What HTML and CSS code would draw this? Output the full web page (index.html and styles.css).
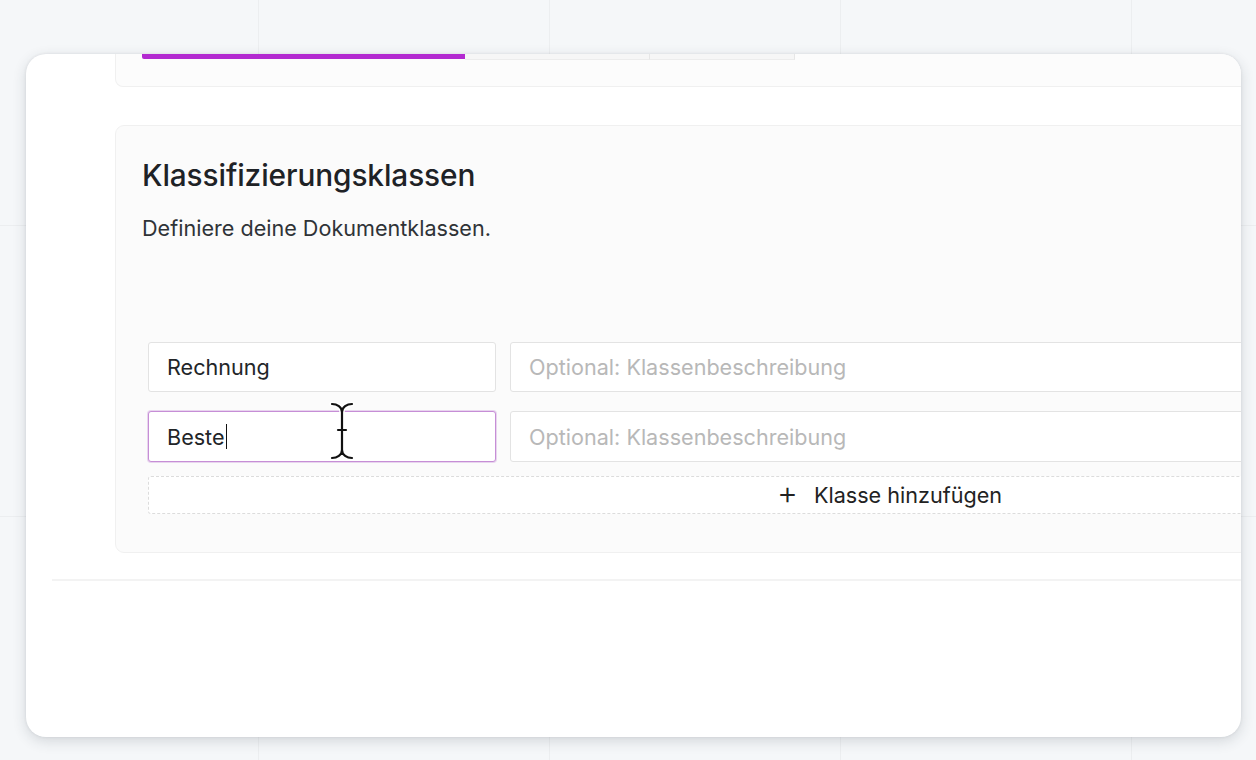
FILE: index.html
```html
<!DOCTYPE html>
<html lang="de">
<head>
<meta charset="utf-8">
<title>Klassifizierungsklassen</title>
<link rel="stylesheet" href="styles.css">
</head>
<body>
<div class="desk">
  <div class="window">
    <div class="top-card">
      <div class="steps">
        <div class="step step-active"></div>
        <div class="step step-mid"></div>
        <div class="step step-last"></div>
      </div>
    </div>
    <section class="card">
      <h2 class="title">Klassifizierungsklassen</h2>
      <p class="subtitle">Definiere deine Dokumentklassen.</p>
      <div class="rows">
        <div class="row">
          <div class="field field-name">Rechnung</div>
          <div class="field field-desc placeholder">Optional: Klassenbeschreibung</div>
        </div>
        <div class="row">
          <div class="field field-name field-focus">Beste<span class="caret"></span></div>
          <div class="field field-desc placeholder">Optional: Klassenbeschreibung</div>
        </div>
        <button class="add-btn" type="button"><span class="plus">+</span>Klasse hinzufügen</button>
      </div>
    </section>
    <div class="divider"></div>
  </div>
  <svg class="ibeam" width="32" height="60" viewBox="0 0 32 60" aria-hidden="true">
    <g fill="none" stroke-linecap="round" stroke-linejoin="round">
      <g stroke="#ffffff" stroke-width="5">
        <path d="M6 3 C11 3 16 6 16 11 C16 6 21 3 26 3"/>
        <path d="M16 11 L16 49"/>
        <path d="M6 57 C11 57 16 54 16 49 C16 54 21 57 26 57"/>
        <path d="M12 29 L20 29"/>
      </g>
      <g stroke="#111111" stroke-width="2.2">
        <path d="M6 3 C11 3 16 6 16 11 C16 6 21 3 26 3"/>
        <path d="M16 11 L16 49"/>
        <path d="M6 57 C11 57 16 54 16 49 C16 54 21 57 26 57"/>
        <path d="M12 29 L20 29"/>
      </g>
    </g>
  </svg>
</div>
</body>
</html>
```
FILE: styles.css
```css
html, body {
  margin: 0;
  padding: 0;
}
body {
  width: 1256px;
  height: 760px;
  overflow: hidden;
  font-family: "Inter", "Liberation Sans", sans-serif;
  background: #f4f7f9;
}
.desk {
  position: relative;
  width: 1256px;
  height: 760px;
  padding: 54px 15px 0 26px;
  box-sizing: border-box;
  background-color: #f5f7f9;
  background-image:
    linear-gradient(to right, rgba(0, 0, 0, 0.035) 1px, transparent 1px),
    linear-gradient(to bottom, rgba(0, 0, 0, 0.035) 1px, transparent 1px);
  background-size: 291px 291px;
  background-position: 258px 225px;
}
.window {
  width: 1215px;
  height: 683px;
  background: #ffffff;
  border-radius: 20px;
  overflow: hidden;
  box-shadow: 0 4px 14px rgba(40, 50, 60, 0.16), 0 0 3px rgba(40, 50, 60, 0.10);
}
.top-card {
  margin-left: 89px;
  width: 1600px;
  height: 33px;
  box-sizing: border-box;
  background: #fcfcfc;
  border: 1px solid #f0f0f0;
  border-top: none;
  border-radius: 0 0 8px 8px;
  padding-left: 26px;
}
.steps {
  display: flex;
  height: 5px;
}
.step {
  height: 5px;
}
.step-active {
  width: 323px;
  background: #b32ad0;
  border-radius: 0 0 0 2px;
}
.step-mid {
  width: 184px;
  background: #f6f6f6;
  border-right: 1px solid #e6e6e6;
  border-bottom: 1px solid #ececec;
}
.step-last {
  width: 144px;
  background: #f6f6f6;
  border-right: 1px solid #e6e6e6;
  border-bottom: 1px solid #ececec;
}
.card {
  margin: 38px 0 0 89px;
  width: 1544px;
  box-sizing: border-box;
  background: #fbfbfb;
  border: 1px solid #f0f0f0;
  border-radius: 9px;
  padding: 32px 27px 38px 26px;
}
.title {
  margin: 0;
  font-size: 29.8px;
  line-height: 34px;
  font-weight: 500;
  color: #1e2226;
  letter-spacing: -0.1px;
}
.subtitle {
  margin: 22px 0 0 0;
  font-size: 21.6px;
  line-height: 28px;
  color: #2f3337;
}
.rows {
  margin-top: 100px;
  padding-left: 6px;
  display: flex;
  flex-direction: column;
}
.row {
  display: flex;
  gap: 14px;
  margin-bottom: 19px;
}
.row + .row {
  margin-bottom: 14px;
}
.field {
  height: 50px;
  box-sizing: border-box;
  background: #ffffff;
  border: 1px solid #e3e3e3;
  border-radius: 3px;
  padding: 0 18px;
  display: flex;
  align-items: center;
  font-size: 21.6px;
  color: #222528;
}
.field-name {
  width: 348px;
  flex: none;
}
.field-desc {
  flex: 1;
}
.row + .row .field {
  height: 51px;
}
.placeholder {
  color: #b8b8b8;
}
.field-focus {
  border-color: #c68ed6;
  box-shadow: 0 0 0 1px rgba(198, 142, 214, 0.35);
}
.caret {
  display: inline-block;
  width: 1.5px;
  height: 25px;
  background: #111;
  margin-left: 1px;
}
.add-btn {
  height: 38px;
  border: 1px dashed #dcdcdc;
  border-radius: 3px;
  background: #ffffff;
  font-family: inherit;
  font-size: 21.6px;
  color: #222;
  display: flex;
  align-items: center;
  justify-content: center;
  gap: 16px;
  padding: 0;
}
.plus {
  font-size: 32px;
  font-weight: 300;
  line-height: 1;
  position: relative;
  top: -2px;
}
.divider {
  margin: 26px 0 0 26px;
  height: 2px;
  background: #f3f3f3;
}
.ibeam {
  position: absolute;
  left: 326px;
  top: 401px;
}
```
